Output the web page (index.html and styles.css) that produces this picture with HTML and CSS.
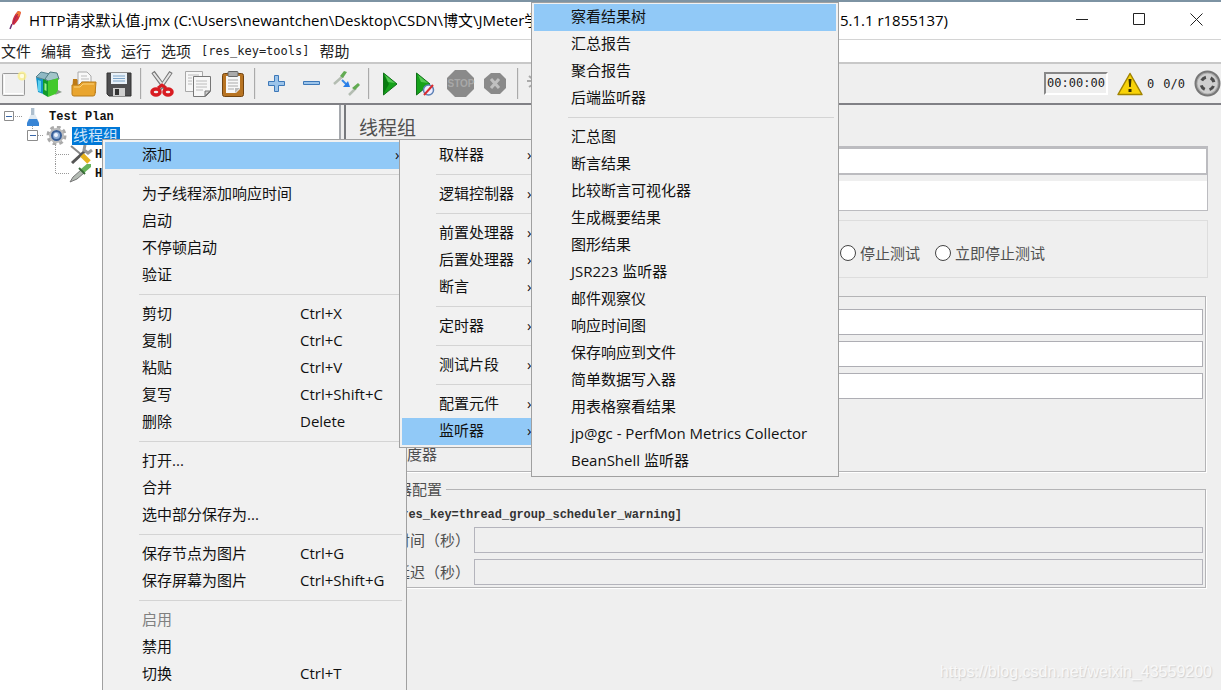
FILE: index.html
```
<!DOCTYPE html>
<html lang="zh-CN">
<head>
<meta charset="utf-8">
<title>HTTP请求默认值.jmx - Apache JMeter</title>
<link rel="stylesheet" href="styles.css">
</head>
<body>
<div class="window">
  <header class="titlebar">
    <svg class="app-icon" width="16" height="20" viewBox="0 0 16 20"><path d="M3 19 5 14" stroke="#6b2c73" stroke-width="1.500"/><path d="M5 14C5 9 8 4 11 1l3 1c-1 6-4 10-7 13z" fill="#d22f3b"/><path d="M9 4 11 1l3 1-2 5z" fill="#ef7b32"/><path d="M6 14C7 10 9 6 11 4" stroke="#9c2361" fill="none"/></svg>
    <div class="title">
      <span>HTTP请求默认值.jmx (C:\Users\newantchen\Desktop\CSDN\博文\JMeter学习</span>
      <span>5.1.1 r1855137)</span>
    </div>
    <div class="window-buttons">
      <button aria-label="最小化"><svg width="13" height="13"><path d="M0 6.500h12" stroke="#222"/></svg></button>
      <button aria-label="最大化"><svg width="13" height="13"><path d="M.5.5h11v11H.5z" stroke="#222" fill="none"/></svg></button>
      <button aria-label="关闭"><svg width="13" height="13"><path d="M.5.5l12 12M12.500.5l-12 12" stroke="#222"/></svg></button>
    </div>
  </header>

  <nav class="menubar">
    <button>文件</button><button>编辑</button><button>查找</button><button>运行</button><button>选项</button><button>[res_key=tools]</button><button>帮助</button>
  </nav>

  <div class="toolbar">
    <button aria-label="新建"><svg width="28" height="28" viewBox="0 0 28 28"><rect x="2.500" y="3.500" width="22" height="22" rx="1" fill="#f0f0f0" stroke="#9a9a9a"/><path d="M4.500 5v19M5 23.500h18" stroke="#fff"/><circle cx="22" cy="6" r="4.500" fill="#fbf08a" opacity=".8"/><circle cx="22" cy="6" r="2.200" fill="#fffde0"/></svg></button>
    <button aria-label="模板"><svg width="28" height="28" viewBox="0 0 28 28"><path d="M1 7 11 10v15L3 22z" fill="#1594c9"/><path d="M1 7 6 2l9 2-4 6z" fill="#8fb9c4" stroke="#54818d"/><path d="M3 10l3 1v11l-3-1z" fill="#5bd0ef"/><path d="M10 9l5-7 7 1 2 6-11 2z" fill="#a2c5c9" stroke="#527a80"/><path d="M8 9l5 2v16l-5-3z" fill="#129a2b"/><path d="M13 11l10-3v15l-10 4z" fill="#43c92c"/><path d="M9.500 13l2 1v7l-2-1z" fill="#9ef08a"/><path d="M23 20l4 2-7 3z" fill="#898"/></svg></button>
    <button aria-label="打开"><svg width="28" height="28" viewBox="0 0 28 28"><path d="M3 9h4l2 3h15l2 11H2z" fill="#bd7a16"/><path d="M8 2h9l4 4v13H8z" fill="#f8f8f8" stroke="#aaa"/><path d="M11 6h6M11 9h8M11 12h8" stroke="#bbb"/><path d="M2 15h7l3-3h14l-1 12q0 2-2 2H4q-2 0-2-2z" fill="#e9a52f" stroke="#b97c1a"/><path d="M4 17h6l3-3h11" stroke="#fbd37c" fill="none"/></svg></button>
    <button aria-label="保存"><svg width="28" height="28" viewBox="0 0 28 28"><path d="M2 3h24v23H4l-2-2z" fill="#4e4e50" stroke="#333"/><path d="M6 3h16v11H6z" fill="#e9f1f8"/><path d="M8 6h12M8 8.500h12M8 11h12" stroke="#7ba3c7"/><path d="M8 18h12v8H8z" fill="#cfcfcf"/><path d="M10 19h4v6h-4z" fill="#333"/></svg></button>
    <span class="sep"></span>
    <button aria-label="剪切"><svg width="28" height="28" viewBox="0 0 28 28"><path d="M4 2 17 20M22 2 10 20" stroke="#777" stroke-width="4"/><path d="M4.500 3 16 18M21.500 3 11 18" stroke="#e6e6e6" stroke-width="2"/><g fill="none" stroke="#d81c22" stroke-width="3.500"><ellipse cx="7" cy="22" rx="4" ry="3"/><ellipse cx="19" cy="22" rx="4" ry="3"/></g><path d="M9 18l4-3 4 3" stroke="#d81c22" stroke-width="3" fill="none"/></svg></button>
    <button aria-label="复制"><svg width="28" height="28" viewBox="0 0 28 28"><g fill="#f7f7f7" stroke="#a8a8a8"><path d="M1.500 1.500h17v20h-17z"/><path d="M9.500 6.500h17v15l-5 5h-12z" stroke="#777"/></g><path d="M4 5h11M4 8h4M4 11h4M4 14h4M12 11h11M12 14h11M12 17h11M12 20h7" stroke="#bcbcbc"/><path d="M21 26v-5h5z" fill="#ccc" stroke="#777"/></svg></button>
    <button aria-label="粘贴"><svg width="28" height="28" viewBox="0 0 28 28"><rect x="3.500" y="3.500" width="21" height="23" rx="2" fill="#b87423" stroke="#724410"/><path d="M7 6h14v13l-4 4H7z" fill="#f8f8f8"/><rect x="9" y="1.500" width="10" height="5" rx="1" fill="#aaa" stroke="#666"/><path d="M9 10h10M9 13h10M9 16h10M9 19h6" stroke="#aaa"/><path d="M16 23v-5h5z" fill="#bbb"/></svg></button>
    <span class="sep"></span>
    <button aria-label="展开"><svg width="28" height="28" viewBox="0 0 28 28"><path d="M11.500 5.500h4v6h6v4h-6v6h-4v-6h-6v-4h6z" fill="#9cc4ea" stroke="#3d78b8"/></svg></button>
    <button aria-label="折叠"><svg width="28" height="28" viewBox="0 0 28 28"><path d="M5.500 11.500h16v3h-16z" fill="#9cc4ea" stroke="#3d78b8"/></svg></button>
    <button aria-label="切换"><svg width="28" height="28" viewBox="0 0 28 28"><path d="M1 14 10 6M16 25l7-7" stroke="#b4bdb2" stroke-width="2.500"/><path d="M7 6l4-5 3 1-4 6zM19 18l6-5 2 2-5 5z" fill="#62ab52"/><path d="M9 10l5 5" stroke="#378be8" stroke-width="2"/><path d="M17 17h-7l5-6z" fill="#287ee8"/></svg></button>
    <span class="sep"></span>
    <button aria-label="启动"><svg width="28" height="28" viewBox="0 0 28 28"><path d="M6.500 3 20 14 6.500 25z" fill="#16a21b" stroke="#12701b"/><path d="M7 5l5 9-5 9z" fill="#087c10"/><path d="M8 5l10 8-7-1z" fill="#54c953"/></svg></button>
    <button aria-label="不停顿启动"><svg width="28" height="28" viewBox="0 0 28 28"><path d="M4.500 3 18 14 4.500 25z" fill="#16a21b" stroke="#12701b"/><path d="M6 5l10 8-7-1z" fill="#54c953"/><circle cx="16.500" cy="20" r="5" fill="#eef" stroke="#5d82b6" stroke-width="1.500"/><path d="M12 25 21 15" stroke="#d82c30" stroke-width="2"/></svg></button>
    <button aria-label="停止" disabled><svg width="28" height="28" viewBox="0 0 28 28"><path d="M8 0h11l8 8v11l-8 8H8l-8-8V8z" fill="#8a8a8a"/><text x="14" y="17" text-anchor="middle" class="stop-text">STOP</text></svg></button>
    <button aria-label="关闭" disabled><svg width="28" height="28" viewBox="0 0 28 28"><path d="M9 3h9l6 6v9l-6 6H9l-7-6V9z" fill="#8a8a8a"/><path d="M9 9l8 9M17 9l-8 9" stroke="#c0c0c0" stroke-width="3"/></svg></button>
    <span class="sep"></span>
    <button aria-label="清除"><svg width="28" height="28" viewBox="0 0 28 28"><path d="M1 11h5M7 4v16M3 6l6 5M3 17l6-4" stroke="#aaa" stroke-width="2"/></svg></button>
    <div class="status">
      <output class="timer">00:00:00</output>
      <svg width="26" height="24" viewBox="0 0 26 24"><path d="M13 1.500 25 22.500H1z" fill="#f8d308" stroke="#a18300" stroke-width="1.500" stroke-linejoin="round"/><path d="M11.500 7h3l-.7 8h-1.600zM11.500 17h3v3h-3z" fill="#3b3200"/></svg>
      <span class="errors">0</span>
      <span class="threads">0/0</span>
      <svg width="27" height="27" viewBox="0 0 27 27"><circle cx="13.500" cy="13.500" r="12" fill="#aaa" stroke="#777" stroke-width="2"/><circle cx="13.500" cy="13.500" r="10" fill="#cfcfcf"/><circle cx="13.500" cy="13.500" r="6.500" fill="none" stroke="#4c4c4c" stroke-width="3" stroke-dasharray="5.200 5" stroke-dashoffset="-2.600"/></svg>
    </div>
  </div>

  <div class="split">
    <ul class="tree">
      <li class="level-0"><svg width="26" height="19"><path d="M15 9.500h7" class="dots"/><path d="M4.500 4.500h9v9h-9z" class="box"/><path d="M6 9.500h6" class="minus"/></svg><svg width="15" height="19" viewBox="0 0 15 19"><path d="M5 1h4v6l4 8v4H1v-4l4-8z" fill="#dfe9f1"/><path d="M5 1h3v7H5z" fill="#aebfce"/><path d="M3 12h8l2 4v3H1v-3z" fill="#3985d5"/></svg><span class="latin">Test Plan</span></li>
      <li class="level-1"><svg width="17" height="19"><path d="M11 9.500h6M5.500 0v4" class="dots"/><path d="M.5 4.500h10v10H.5z" class="box"/><path d="M3 9.500h6" class="minus"/></svg><svg width="25" height="19" viewBox="0 0 25 19"><circle cx="12.500" cy="9.500" r="8.500" fill="none" stroke="#aaa" stroke-width="3" stroke-dasharray="3.700 3"/><circle cx="12.500" cy="9.500" r="6.500" fill="#ddd" stroke="#bbb" stroke-width="2"/><circle cx="12.500" cy="9.500" r="4.500" fill="#8fafd7" stroke="#385f98" stroke-width="2"/><circle cx="12" cy="9" r="2" fill="#eef4ff"/></svg><span class="selected">线程组</span></li>
      <li class="level-2"><svg width="14" height="19"><path d="M.5 0v19M1 9.500h13" class="dots"/></svg><svg width="24" height="19" viewBox="0 0 24 19"><path d="M2 1l12 10" stroke="#888" stroke-width="2"/><path d="M3 18 16 6" stroke="#555" stroke-width="3"/><path d="M16 0l-1 5 4 3 4-3" stroke="#999" stroke-width="3" fill="none"/><path d="M13 10l7 7" stroke="#e6b21e" stroke-width="5"/></svg><span class="latin">HTTP</span></li>
      <li class="level-2"><svg width="14" height="19"><path d="M.5 0v9.500H14" class="dots"/></svg><svg width="24" height="19" viewBox="0 0 24 19"><path d="M1 18l3-5 8-7 3 3-7 6z" fill="#b4bbb4" stroke="#777"/><path d="M12 5l7-6 3 1v3l-7 6z" fill="#67b35a"/><path d="M10 4l6 6" stroke="#396c38" stroke-width="2"/></svg><span class="latin">HTTP</span></li>
    </ul>

    <main class="panel">
      <h1>线程组</h1>
      <div class="identity">
        <input type="text" class="name" aria-label="名称">
        <textarea class="comment" aria-label="注释"></textarea>
      </div>
      <div class="on-error">
        <label><input type="radio" name="err">停止测试</label>
        <label><input type="radio" name="err">立即停止测试</label>
      </div>
      <fieldset class="properties" aria-label="线程属性">
        <input type="text" class="field" aria-label="线程数">
        <input type="text" class="field" aria-label="Ramp-Up时间">
        <input type="text" class="field" aria-label="循环次数">
        <label class="scheduler"><input type="checkbox">调度器</label>
      </fieldset>
      <fieldset class="config">
        <legend>调度器配置</legend>
        <p class="latin">[res_key=thread_group_scheduler_warning]</p>
        <div class="row"><label for="duration">持续时间（秒）</label><input type="text" id="duration" disabled></div>
        <div class="row"><label for="delay">启动延迟（秒）</label><input type="text" id="delay" disabled></div>
      </fieldset>
    </main>
  </div>

  <div class="menu context">
    <button class="active more">添加</button>
    <hr>
    <button>为子线程添加响应时间</button>
    <button>启动</button>
    <button>不停顿启动</button>
    <button>验证</button>
    <hr>
    <button>剪切<kbd>Ctrl+X</kbd></button>
    <button>复制<kbd>Ctrl+C</kbd></button>
    <button>粘贴<kbd>Ctrl+V</kbd></button>
    <button>复写<kbd>Ctrl+Shift+C</kbd></button>
    <button>删除<kbd>Delete</kbd></button>
    <hr>
    <button>打开...</button>
    <button>合并</button>
    <button>选中部分保存为...</button>
    <hr>
    <button>保存节点为图片<kbd>Ctrl+G</kbd></button>
    <button>保存屏幕为图片<kbd>Ctrl+Shift+G</kbd></button>
    <hr>
    <button disabled>启用</button>
    <button>禁用</button>
    <button>切换<kbd>Ctrl+T</kbd></button>
  </div>

  <div class="menu add">
    <button class="more">取样器</button>
    <hr>
    <button class="more">逻辑控制器</button>
    <hr>
    <button class="more">前置处理器</button>
    <button class="more">后置处理器</button>
    <button class="more">断言</button>
    <hr>
    <button class="more">定时器</button>
    <hr>
    <button class="more">测试片段</button>
    <hr>
    <button class="more">配置元件</button>
    <button class="more active">监听器</button>
  </div>

  <div class="menu listeners">
    <button class="active">察看结果树</button>
    <button>汇总报告</button>
    <button>聚合报告</button>
    <button>后端监听器</button>
    <hr>
    <button>汇总图</button>
    <button>断言结果</button>
    <button>比较断言可视化器</button>
    <button>生成概要结果</button>
    <button>图形结果</button>
    <button>JSR223 监听器</button>
    <button>邮件观察仪</button>
    <button>响应时间图</button>
    <button>保存响应到文件</button>
    <button>简单数据写入器</button>
    <button>用表格察看结果</button>
    <button>jp@gc - PerfMon Metrics Collector</button>
    <button>BeanShell 监听器</button>
  </div>

  <div class="watermark">https://blog.csdn.net/weixin_43559200</div>
</div>
</body>
</html>
```
FILE: styles.css
```
* { box-sizing: border-box; }
body {
  margin: 0;
  overflow: hidden;
  font: 15px/20px "Open Sans", "Noto Sans CJK SC", sans-serif;
  color: #111;
  background: #efefef;
}
button {
  padding: 0;
  border: 0;
  background: none;
  font: inherit;
  color: inherit;
  text-align: left;
  white-space: nowrap;
}
svg { display: block; flex: none; }
.window {
  position: relative;
  display: flex;
  flex-direction: column;
  min-height: 100vh;
  overflow: hidden;
  border-top: 2px solid #7d93a3;
}

/* title bar */
.titlebar {
  display: flex;
  align-items: center;
  height: 38px;
  padding: 0 0 2px 7px;
  background: #fff;
  border-bottom: 1px solid #d4d4d4;
}
.title {
  display: flex;
  justify-content: space-between;
  flex: 0 1 919px;
  margin-left: 6px;
  color: #000;
  white-space: nowrap;
}
.window-buttons {
  display: flex;
  gap: 44px;
  margin-left: auto;
  padding-right: 18px;
}

/* menu bar */
.menubar {
  display: flex;
  align-items: center;
  gap: 10px;
  height: 24px;
  padding-left: 1px;
  background: #fff;
  border-bottom: 2px solid #c8c8c8;
}
.menubar button {
  font: 15px/20px "Noto Sans CJK SC", sans-serif;
  color: #222;
}
.menubar button:nth-child(6) { font: 12px/20px "DejaVu Sans Mono", monospace; }

/* toolbar */
.toolbar {
  display: flex;
  align-items: center;
  gap: 7px;
  height: 41px;
  border-bottom: 2px solid #808085;
}
.toolbar .sep {
  width: 2px;
  height: 31px;
  background: #aaa;
  border-right: 1px solid #e4e4e4;
}
.stop-text { font: bold 10px "Liberation Sans", sans-serif; fill: #a8a8a8; }
.status {
  display: flex;
  align-items: center;
  margin-left: auto;
  font: 12px/20px "DejaVu Sans Mono", monospace;
  color: #222;
}
.timer {
  width: 64px;
  height: 23px;
  margin-right: 9px;
  padding-left: 1px;
  border: 2px solid;
  border-color: #888 #fff #fff #888;
  line-height: 19px;
}
.errors { margin: 0 9px 0 4px; }
.threads { margin-right: 9px; }

/* tree */
.split { display: flex; flex: 1; }
.tree {
  flex: 0 0 341px;
  margin: 0;
  padding: 2px 0 0;
  list-style: none;
  background: #fff;
  border-right: 2px solid #a5a8ad;
}
.tree li { display: flex; align-items: center; height: 19px; white-space: nowrap; }
.tree .level-1 { padding-left: 27px; }
.tree .level-2 { padding-left: 55px; }
.dots { fill: none; stroke: #999; stroke-dasharray: 1 1; }
.box { fill: #fff; stroke: #8c8c8c; }
.minus { stroke: #3a67a8; }
.latin { font: bold 12px/18px "Liberation Mono", monospace; }
.tree .latin { margin-left: 2px; }
.tree .level-0 .latin { margin-left: 8px; }
.selected {
  margin-left: 3px;
  padding: 0 2px 2px 1px;
  background: #0078d7;
  color: #cfe6fa;
  line-height: 16px;
}

/* right panel */
.panel {
  flex: 1;
  margin-left: 3px;
  padding: 0 13px;
  border-left: 2px solid #77797d;
  color: #505050;
}
.panel h1 {
  margin: 0;
  padding: 11px 0 6px;
  font-size: 19px;
  line-height: 24px;
  font-weight: normal;
}
input, textarea { font: inherit; border-radius: 0; }
.identity {
  border: 1px solid #bcbcc0;
  border-top-width: 2px;
}
.identity input, .identity textarea { display: block; width: 100%; margin: 0; }
.name {
  height: 27px;
  border: 1px solid #bcbcc0;
  border-bottom-width: 2px;
  margin-top: 1px;
  background: #fff;
}
.comment {
  height: 35px;
  border: 0;
  border-top: 6px solid #efefef;
  resize: none;
  background: #fff;
}
.on-error {
  display: flex;
  align-items: center;
  justify-content: flex-end;
  gap: 15px;
  height: 58px;
  margin-top: 9px;
  padding: 7px 162px 0 0;
  border: 1px solid #ddd;
}
.on-error label { display: flex; align-items: center; }
.on-error input {
  appearance: none;
  width: 16px;
  height: 16px;
  margin: 0 4px 0 0;
  border: 1px solid #444;
  border-radius: 50%;
  background: #fff;
}
fieldset {
  min-width: 0;
  margin: 0 2px 0 0;
  border: 1px solid #b4b4b6;
  box-shadow: 1px 1px 0 #fff;
}
.properties {
  margin-top: 18px;
  padding: 12px 2px 7px 115px;
}
.field {
  display: block;
  width: 100%;
  height: 26px;
  margin-bottom: 6px;
  border: 1px solid #aeaeb4;
  background: #fff;
}
.scheduler {
  display: flex;
  align-items: center;
  gap: 4px;
  margin: 45px 0 0 -100px;
}
.scheduler input { margin: 0; }
.config {
  margin-top: 7px;
  padding: 0 2px 2px 5px;
}
.config legend { padding: 0 4px 0 2px; }
.config p { margin: 7px 0 3px 29px; color: #333; }
.row { display: flex; align-items: center; gap: 4px; }
.row + .row { margin-top: 6px; }
.row label { flex: none; }
.row input {
  flex: 1;
  height: 26px;
  border: 1px solid #b4b4bc;
  background: #efefef;
}

/* popup menus */
.menu {
  position: absolute;
  display: flex;
  flex-direction: column;
  padding: 2px;
  border: 1px solid #a0a0a0;
  background: #f1f1f1;
}
.context { left: 102px; top: 137px; width: 305px; }
.add { left: 399px; top: 137px; width: 144px; }
.listeners { left: 531px; top: 0; width: 308px; padding: 1px 2px; }
.menu button {
  display: grid;
  grid-template-columns: 158px 1fr;
  align-items: center;
  flex: none;
  height: 27px;
  padding: 0 0 3px 37px;
}
.menu .more { grid-template-columns: 1fr 13px; }
.menu .more::after { content: "›"; }
.context .more { grid-template-columns: 1fr 9px; }
.menu .active { background: #91c9f7; }
.menu button:disabled { color: #808080; }
.menu kbd { font: inherit; }
.menu hr {
  flex: none;
  height: 1px;
  margin: 5px 2px 6px 34px;
  border: 0;
  background: #d4d4d4;
}
.listeners button { grid-template-columns: 1fr; }

.watermark {
  position: absolute;
  right: 9px;
  bottom: 8px;
  font: 16px/20px "Liberation Sans", sans-serif;
  color: #f8f8f8;
  text-shadow: 1px 1px 1px #d0d0d0;
}
```
